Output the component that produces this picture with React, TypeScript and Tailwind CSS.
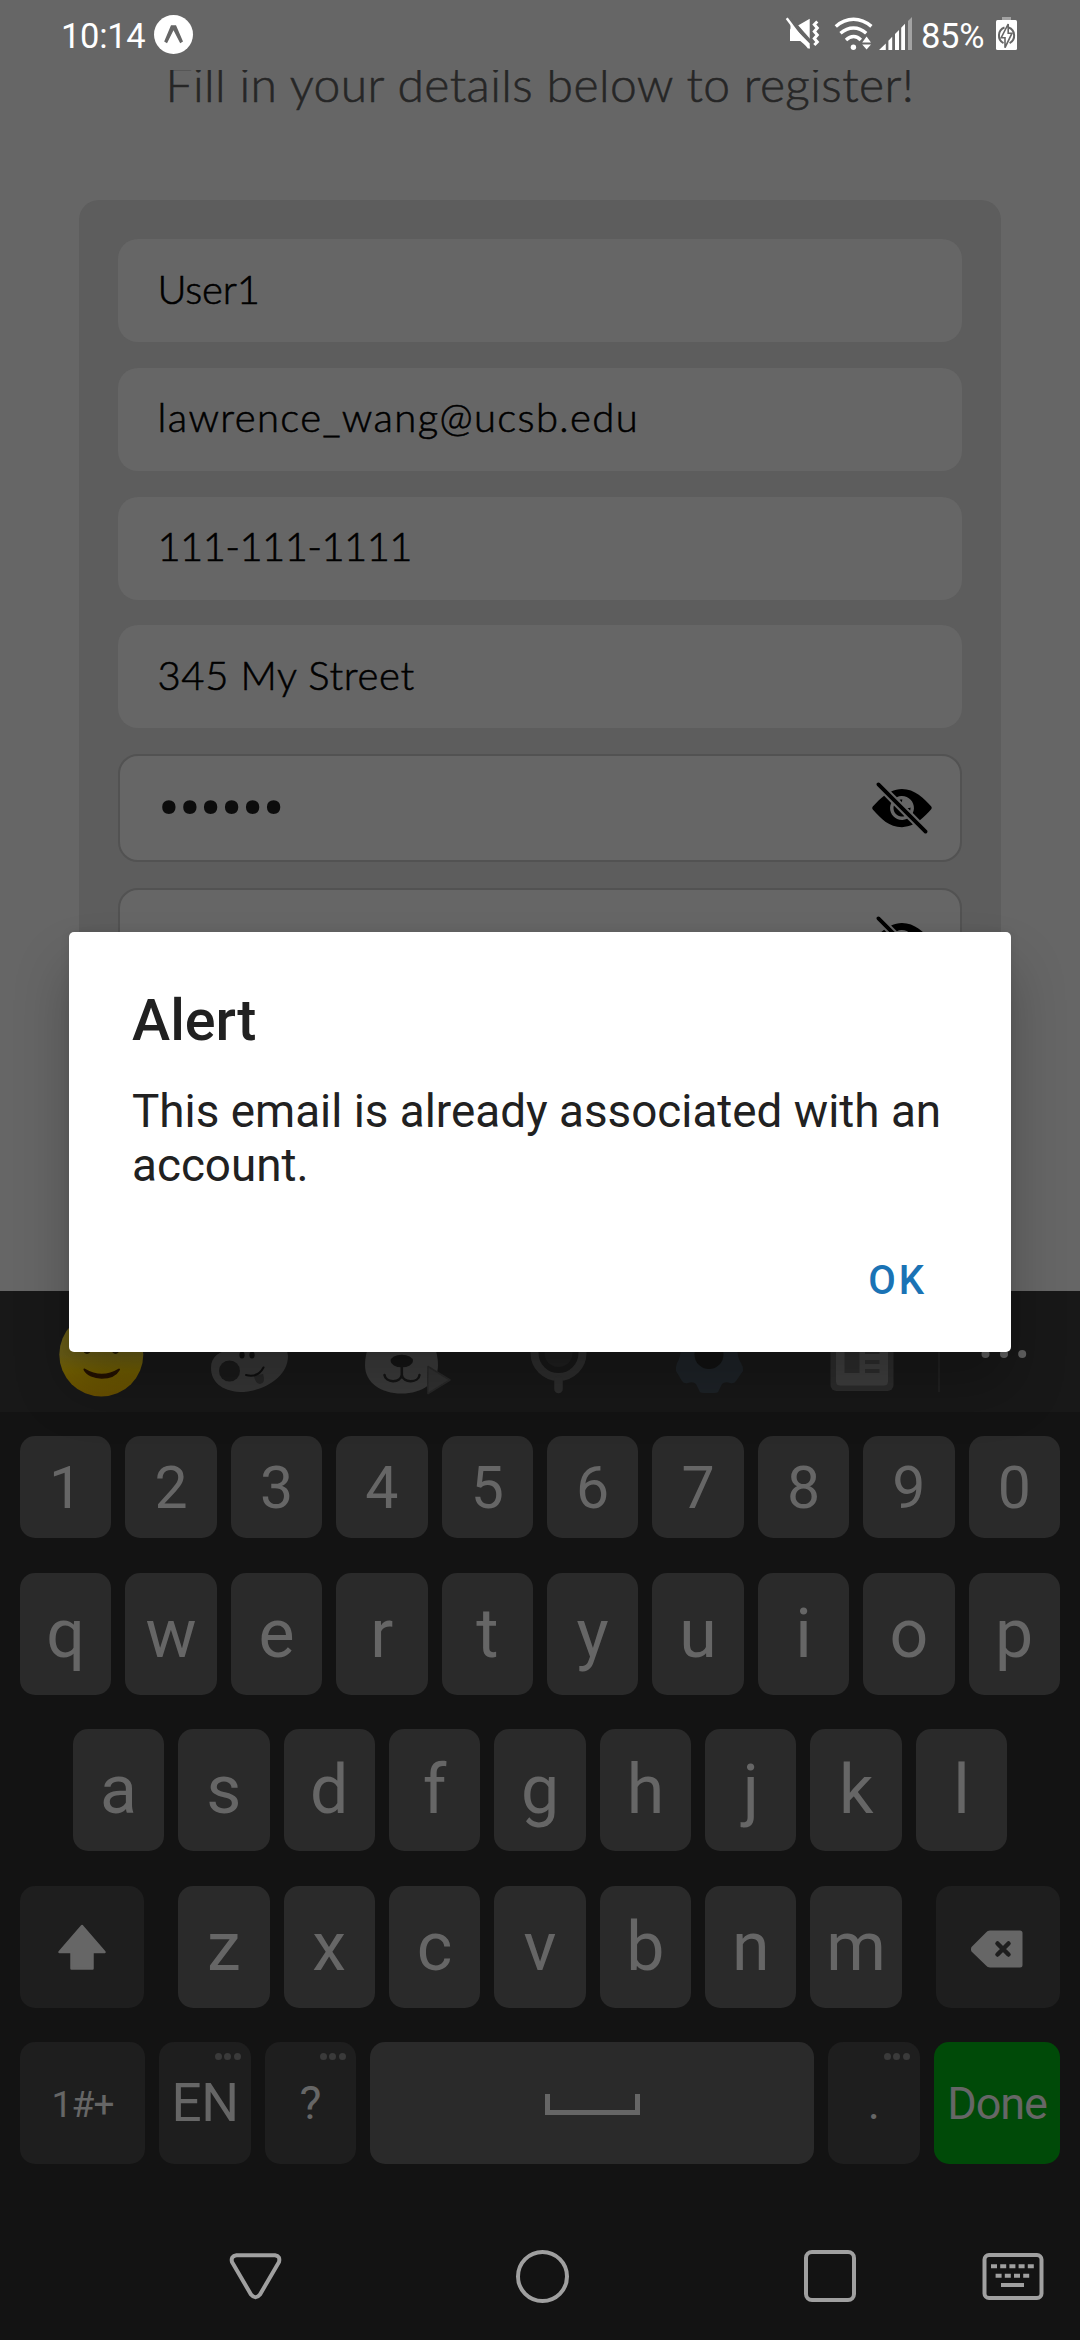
import type { ReactNode } from "react";
import { IoIosEyeOff } from "react-icons/io";

const textFields = [
  { value: "User1", tracking: "tracking-[-0.2px]" },
  { value: "lawrence_wang@ucsb.edu", tracking: "tracking-[1.37px]" },
  { value: "111-111-1111", tracking: "tracking-[-0.6px]" },
  { value: "345 My Street", tracking: "tracking-[0.65px]" },
];

function StatusBar() {
  return (
    <header className="flex h-[70px] shrink-0 items-start pt-[14px] font-['Roboto',sans-serif] text-[34.5px] leading-[42px] text-white">
      <span className="mt-px ml-[61px] w-[93px] tracking-[-0.3px]">10:14</span>
      <svg className="h-[41px] w-[40px]" viewBox="154 14 40 41">
        <circle cx="173.5" cy="34.5" r="19.5" fill="#fff" />
        <path d="M171 25.2h5l7 16.4-2.8 1.7-6.7-13-6.5 13-2.8-1.7z" fill="#666" />
      </svg>
      <svg className="ml-[591px] h-[36px] w-[36px]" viewBox="784 14 36 36">
        <path d="M789 28.5l10.8 12.4H789zM797 25.5l11.7-6.8v21.2z" fill="#fff" />
        <path d="M794.5 36.5v4.4h4.8l9.4 8.2V43.5L789.5 24v12.5z" fill="#fff" />
        <path d="M785.7 18.2L808.5 44" stroke="#666" strokeWidth="2.5" transform="translate(2 -1.6)" />
        <path d="M785.7 18.2L808 48" stroke="#fff" strokeWidth="2.4" />
        <path d="M816.3 21.5l-3 3 3 3.5-3 3.5 3 3.5-3 3.5 3 3.5-3 3" fill="none" stroke="#fff" strokeWidth="3" />
      </svg>
      <svg className="ml-[12px] h-[38px] w-[42px]" viewBox="832 14 42 38">
        <g fill="none" stroke="#fff" strokeWidth="3.4">
          <path d="M834.8 26.4C845.5 16.8 859.5 16.8 870.4 26.4" />
          <path d="M839.5 33.2C847.5 26.2 857.5 26.2 865.2 33.2" />
          <path d="M845 40C849.8 35.4 855.6 35.4 859.8 40" />
        </g>
        <circle cx="852.4" cy="47.2" r="2.7" fill="#fff" />
        <path d="M861.2 42.4l4.4-5.8 4.4 5.8zM861.2 44.4h8.8l-4.4 5z" fill="#fff" />
      </svg>
      <svg className="mt-px ml-[3px] h-[36px] w-[36px]" viewBox="877 15 36 36">
        <path d="M878 50l6.8-6.6V50zM887.4 50V40.8l3.8-4V50zM894 50V34l4-4V50zM900.2 50V27.8l3.8-4V50z" fill="#fff" />
        <path d="M907 50V20.9l4-4V50z" fill="#a3a3a3" />
      </svg>
      <span className="mt-px ml-[7px] w-[74px] tracking-[-0.3px]">85%</span>
      <svg className="mt-px h-[36px] w-[22px]" viewBox="994 15 22 36">
        <path d="M1001 17h9v4h-9z" fill="#a3a3a3" />
        <rect x="995" y="20" width="21" height="30" rx="1.5" fill="#fff" />
        <path d="M1003.5 27.5a8.3 8.5 0 0 0-1 15.6M1007.6 27.5a8.3 8.5 0 0 1 1 15.6" fill="none" stroke="#666" strokeWidth="2" />
        <path d="M1007.2 24v9.2h3.8l-7 14.5v-10h-3.8z" fill="none" stroke="#666" strokeWidth="1.6" />
      </svg>
    </header>
  );
}

function PasswordField({ value }: { value: string }) {
  return (
    <div className="mb-[26px] flex h-[108px] shrink-0 items-center justify-between rounded-[20px] border-[2.5px] border-[#525252] bg-[#666] pr-[24px] pl-[37px]">
      <span className="pt-[1px] font-['Roboto',sans-serif] text-[73px] leading-none tracking-[-2.7px] text-[#0c0c0c]">{value}</span>
      <IoIosEyeOff className="size-[68px] text-black" />
    </div>
  );
}

function RegisterForm() {
  return (
    <main className="h-[1221px] shrink-0 overflow-hidden font-['Lato',sans-serif] font-light">
      <h1 className="mt-[-16px] h-[60px] text-center text-[48px] leading-[60px] tracking-[0.42px] whitespace-nowrap text-[#262626] [-webkit-text-stroke:0.6px_#262626]">
        Fill in your details below to register!
      </h1>
      <section className="mx-[79px] mt-[86px] flex h-[1300px] flex-col rounded-t-[20px] bg-[#5d5d5d] px-[39px] pt-[39px]">
        {textFields.map(({ value, tracking }) => (
          <div
            key={value}
            className={`mb-[25.800px] flex h-[103px] shrink-0 items-center rounded-[20px] bg-[#666] pb-1 pl-[39.500px] text-[40px] text-black [-webkit-text-stroke:0.6px_#000] ${tracking}`}
          >
            {value}
          </div>
        ))}
        <PasswordField value="••••••" />
        <PasswordField value="" />
      </section>
    </main>
  );
}

function ToolbarIcons() {
  return (
    <div className="flex h-[121px] shrink-0 items-center bg-[#181818] pl-[25px]">
      <svg className="h-[121px] w-[152px] brightness-110" viewBox="25 1291 152 121">
        <defs>
          <linearGradient id="face" x1="0" y1="0" x2="0" y2="1">
            <stop offset="0.5" stopColor="#5f5414" />
            <stop offset="0.7" stopColor="#685600" />
            <stop offset="1" stopColor="#5f4900" />
          </linearGradient>
        </defs>
        <circle cx="101.3" cy="1354.5" r="42" fill="url(#face)" />
        <ellipse cx="87" cy="1349" rx="4" ry="5" fill="#211800" />
        <ellipse cx="115.500" cy="1349" rx="4" ry="5" fill="#211800" />
        <path d="M84.500 1369.500Q102 1380 119 1369.500C113 1380.500 90 1380.500 84.500 1369.500z" fill="#211000" stroke="#211000" strokeWidth="2" strokeLinejoin="round" />
      </svg>
      <svg className="h-[121px] w-[152px] brightness-125" viewBox="177 1291 152 121">
        <path d="M211 1368C211 1356 220 1351 232 1349C244 1330 286 1328 288 1356C288 1378 262 1392 240 1392C222 1391 211 1382 211 1368z" fill="#2c2c2c" />
        <circle cx="229.500" cy="1371" r="10.500" fill="#151515" />
        <ellipse cx="242" cy="1355" rx="2.600" ry="3.500" fill="#0c0c0c" />
        <ellipse cx="252" cy="1355" rx="2.600" ry="3.500" fill="#0c0c0c" />
        <path d="M254 1376l9-2q3 9-3 10q-5-1-6-8z" fill="#1f1f1f" />
        <path d="M246 1375Q258 1378 263.500 1367.500" fill="none" stroke="#0c0c0c" strokeWidth="2" strokeLinecap="round" />
      </svg>
      <svg className="h-[121px] w-[152px] brightness-125" viewBox="329 1291 152 121">
        <path d="M369 1345h65q4 10 4 20c0 18-16 28.500-36.500 28.500S365 1383 365 1365q0-10 4-20z" fill="#303030" />
        <ellipse cx="401.800" cy="1361" rx="11.200" ry="6.300" fill="#111" />
        <path d="M401.800 1366v9M384.500 1375c1 8 16 8.500 17.300 0c1.300 8.500 17 8 17.700 0" fill="none" stroke="#111" strokeWidth="2.500" strokeLinecap="round" />
        <path d="M428 1366.500q-.5 13 0 27l22-13.500z" fill="#292929" stroke="#222" strokeWidth="1.500" strokeLinejoin="round" />
      </svg>
      <svg className="h-[121px] w-[152px] brightness-125" viewBox="481 1291 152 121">
        <circle cx="558.500" cy="1353" r="24" fill="none" stroke="#252525" strokeWidth="8" />
        <circle cx="558.500" cy="1353" r="14" fill="#191919" />
        <path d="M558.500 1380v9" stroke="#252525" strokeWidth="8.500" strokeLinecap="round" />
      </svg>
      <svg className="h-[121px] w-[152px] brightness-110" viewBox="633 1291 152 121">
        <path
          d="M681 1345Q681 1357 677 1363Q675.500 1367 676 1371L682 1381Q684 1384 688 1383Q693 1381 696 1384L700 1392Q701 1393 704 1393H714Q717 1393 718 1392L722 1384Q725 1381 730 1383Q734 1384 736 1381L743 1371Q743.500 1367 741 1363Q737 1357 737 1345z"
          fill="#1b2024"
        />
        <circle cx="709" cy="1354.500" r="14.500" fill="#101010" />
      </svg>
      <svg className="h-[121px] w-[152px] brightness-125" viewBox="785 1291 152 121">
        <rect x="830.500" y="1330" width="63" height="61" rx="6" fill="#242424" />
        <rect x="836" y="1334" width="52" height="51.500" rx="4" fill="#323232" />
        <path d="M844.500 1345h15v28h-15zM865 1349h14.500v5H865zM865 1360h14.500v4H865zM865 1369h14.500v4H865z" fill="#242424" />
      </svg>
      <div className="ml-[1px] h-[80px] w-[1.500px] bg-[#212121]" />
      <svg className="mt-[5px] ml-[41px] h-[10px] w-[46px]" viewBox="980 1349 46 10" fill="#606060">
        <circle cx="984.500" cy="1354" r="4" />
        <circle cx="1003" cy="1354" r="4" />
        <circle cx="1021.200" cy="1354" r="4" />
      </svg>
    </div>
  );
}

function LetterKeys({ letters }: { letters: string }) {
  return (
    <>
      {letters.split("").map((letter) => (
        <div
          key={letter}
          className="flex h-full w-[91.400px] shrink-0 items-center justify-center rounded-[15px] bg-[#2a2a2a] text-[68px] leading-none"
        >
          {letter}
        </div>
      ))}
    </>
  );
}

function FnKey({ className, children, more }: { className: string; children: ReactNode; more?: boolean }) {
  return (
    <div className={`relative flex h-full shrink-0 items-center justify-center rounded-[15px] bg-[#1e1e1e] leading-none ${className}`}>
      {children}
      {more && (
        <div className="absolute top-[10.500px] right-[10px] flex gap-[2.700px]">
          <i className="size-[7px] rounded-full bg-[#3a3a3a]" />
          <i className="size-[7px] rounded-full bg-[#3a3a3a]" />
          <i className="size-[7px] rounded-full bg-[#3a3a3a]" />
        </div>
      )}
    </div>
  );
}

function Keyboard() {
  return (
    <div className="flex shrink-0 flex-col px-[20px] pt-[24px] font-['Roboto',sans-serif] text-[#666]">
      <div className="grid h-[102px] grid-cols-10 gap-[14px]">
        {"1234567890".split("").map((digit) => (
          <div key={digit} className="flex items-center justify-center rounded-[15px] bg-[#2a2a2a] text-[59px] leading-none">
            {digit}
          </div>
        ))}
      </div>
      <div className="mt-[35px] flex h-[122px] gap-[14px]">
        <LetterKeys letters="qwertyuiop" />
      </div>
      <div className="mt-[34px] flex h-[122px] justify-center gap-[14px]">
        <LetterKeys letters="asdfghjkl" />
      </div>
      <div className="mt-[35px] flex h-[122px] justify-between">
        <FnKey className="w-[124px]">
          <svg className="h-[46px] w-[50px]" viewBox="0 0 50 46">
            <path d="M25 2L47.500 28H35.500V44.500H14.500V28H2.500z" fill="#666" stroke="#666" strokeWidth="2.500" strokeLinejoin="round" />
          </svg>
        </FnKey>
        <div className="flex gap-[14px]">
          <LetterKeys letters="zxcvbnm" />
        </div>
        <FnKey className="w-[124px]">
          <svg className="mt-[3px] ml-[-2px] h-[40px] w-[54px]" viewBox="0 0 54 40">
            <path d="M20 1.500H50Q52.500 1.500 52.500 4V36Q52.500 38.500 50 38.500H20Q17.500 38.500 16 36.500L1.500 22.500Q.5 20 1.500 18L16 3.500Q17.500 1.500 20 1.500z" fill="#666" />
            <path d="M27.500 14.500l11 11M38.500 14.500l-11 11" stroke="#1e1e1e" strokeWidth="4.500" strokeLinecap="round" />
          </svg>
        </FnKey>
      </div>
      <div className="mt-[34px] flex h-[122px] gap-[14px]">
        <FnKey className="w-[125px] pt-[3px] text-[37px] tracking-[-0.8px]">1#+</FnKey>
        <FnKey className="w-[92px] pt-[1px] text-[53px] tracking-[-0.5px]" more>EN</FnKey>
        <FnKey className="w-[91px] pt-[1px] text-[46.500px]" more>?</FnKey>
        <div className="flex flex-1 items-center justify-center rounded-[15px] bg-[#2a2a2a]">
          <div className="mt-[3px] h-[21px] w-[95px] border-x-[5px] border-b-[5px] border-[#666]" />
        </div>
        <FnKey className="w-[92px] pt-[1px] text-[46.500px]" more>.</FnKey>
        <div className="flex w-[126px] items-center justify-center rounded-[15px] bg-[#004a08] pt-[1px] text-[45px] leading-none tracking-[-1.1px]">
          Done
        </div>
      </div>
    </div>
  );
}

function NavBar() {
  return (
    <nav className="mt-[82px] flex h-[60px] shrink-0 items-center text-[#a0a0a0]">
      <svg className="ml-[229px] h-[60px] w-[53px]" viewBox="229 2246 53 60" fill="none" stroke="currentColor" strokeWidth="4">
        <path d="M236.500 2255.200H275Q280.500 2256 279 2262L260 2294.500Q255.500 2300 251 2294.500L232 2262Q230.500 2256 236.500 2255.200z" />
      </svg>
      <div className="ml-[234px] size-[53px] rounded-full border-4 border-current" />
      <div className="ml-[235px] size-[52px] rounded-[8px] border-4 border-current" />
      <svg className="ml-[126px] h-[48px] w-[62px]" viewBox="0 0 62 48">
        <rect x="2.500" y="3" width="57" height="43" rx="4.500" fill="none" stroke="currentColor" strokeWidth="4" />
        <path d="M9 14.300H52.500" stroke="currentColor" strokeWidth="4" strokeDasharray="6 3.200" />
        <path d="M13.600 23.700H48" stroke="currentColor" strokeWidth="4" strokeDasharray="6 3.200" />
        <path d="M19 33H42" stroke="currentColor" strokeWidth="4" />
      </svg>
    </nav>
  );
}

function AlertDialog() {
  return (
    <div
      role="alertdialog"
      className="absolute top-[932px] left-[69px] flex h-[420px] w-[942px] flex-col rounded-[5px] bg-white px-[63px] font-['Roboto',sans-serif] text-[#212121] shadow-[0_36px_56px_rgba(0,0,0,0.24),0_0_10px_rgba(0,0,0,0.08)]"
    >
      <h2 className="mt-[54px] text-[57.500px] leading-[70px] font-medium">Alert</h2>
      <p className="mt-[29px] text-[45.800px] leading-[54px] whitespace-pre">{"This email is already associated with an\naccount."}</p>
      <button className="mt-[64px] mr-[21px] self-end text-[40px] leading-[48px] font-medium tracking-[3px] text-[#1a73b5]">OK</button>
    </div>
  );
}

export default function App() {
  return (
    <div className="relative flex h-[2340px] w-[1080px] flex-col overflow-hidden bg-[#666]">
      <StatusBar />
      <RegisterForm />
      <div className="flex flex-1 flex-col bg-[#131313]">
        <ToolbarIcons />
        <Keyboard />
        <NavBar />
      </div>
      <AlertDialog />
    </div>
  );
}
